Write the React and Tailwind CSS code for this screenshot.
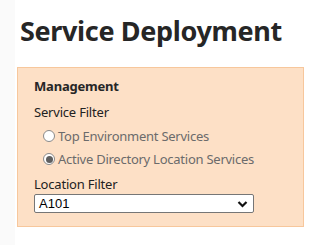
import React from "react";

const font = { fontFamily: '"Noto Sans", "Open Sans", sans-serif' };

function Radio({ checked, label }) {
  return (
    <div className="flex items-center h-[20px]">
      <span className="w-[12px] h-[12px] rounded-full border border-[#8a8a8a] bg-white flex items-center justify-center shrink-0">
        {checked && <span className="w-[7px] h-[7px] rounded-full bg-[#5f5f5f]" />}
      </span>
      <span className="ml-[3px] text-[13px] text-[#6b6b6b] leading-none tracking-[-0.25px]">{label}</span>
    </div>
  );
}

export default function App() {
  return (
    <div className="flex w-[317px] h-[245px] bg-white" style={font}>
      <div className="w-[15px] bg-[#fafafa]" />
      <div className="flex-1 pt-[13px] pl-[2px]">
        <h1 className="text-[27px] font-bold text-[#262626] leading-[36px] ml-[3px] tracking-[-0.35px]">
          Service Deployment
        </h1>
        <div className="mt-[18px] w-[287px] h-[160px] bg-[#fde0c6] border border-[#f7c79c] pl-[16px] pt-[9px]">
          <div className="text-[13px] font-bold text-[#262626] leading-[18px] tracking-[-0.2px]">Management</div>
          <div className="mt-[8px] text-[13px] text-[#222] leading-[18px] tracking-[-0.2px]">Service Filter</div>
          <div className="mt-[5px] pl-[9px] flex flex-col gap-[3px]">
            <Radio label="Top Environment Services" />
            <Radio checked label="Active Directory Location Services" />
          </div>
          <div className="mt-[6px] text-[13px] text-[#222] leading-[18px] tracking-[-0.2px]">Location Filter</div>
          <div className="mt-[1px] w-[220px] h-[19px] bg-white border border-[#767676] rounded-[2px] flex items-center justify-between pl-[4px] pr-[5px]">
            <span className="text-[13px] text-black leading-none" style={{ fontFamily: '"Liberation Sans", Arial, sans-serif' }}>A101</span>
            <svg width="11" height="8" viewBox="0 0 11 8">
              <path d="M1.5 2 L5.5 6 L9.5 2" fill="none" stroke="#111" strokeWidth="2.2" />
            </svg>
          </div>
        </div>
      </div>
    </div>
  );
}
